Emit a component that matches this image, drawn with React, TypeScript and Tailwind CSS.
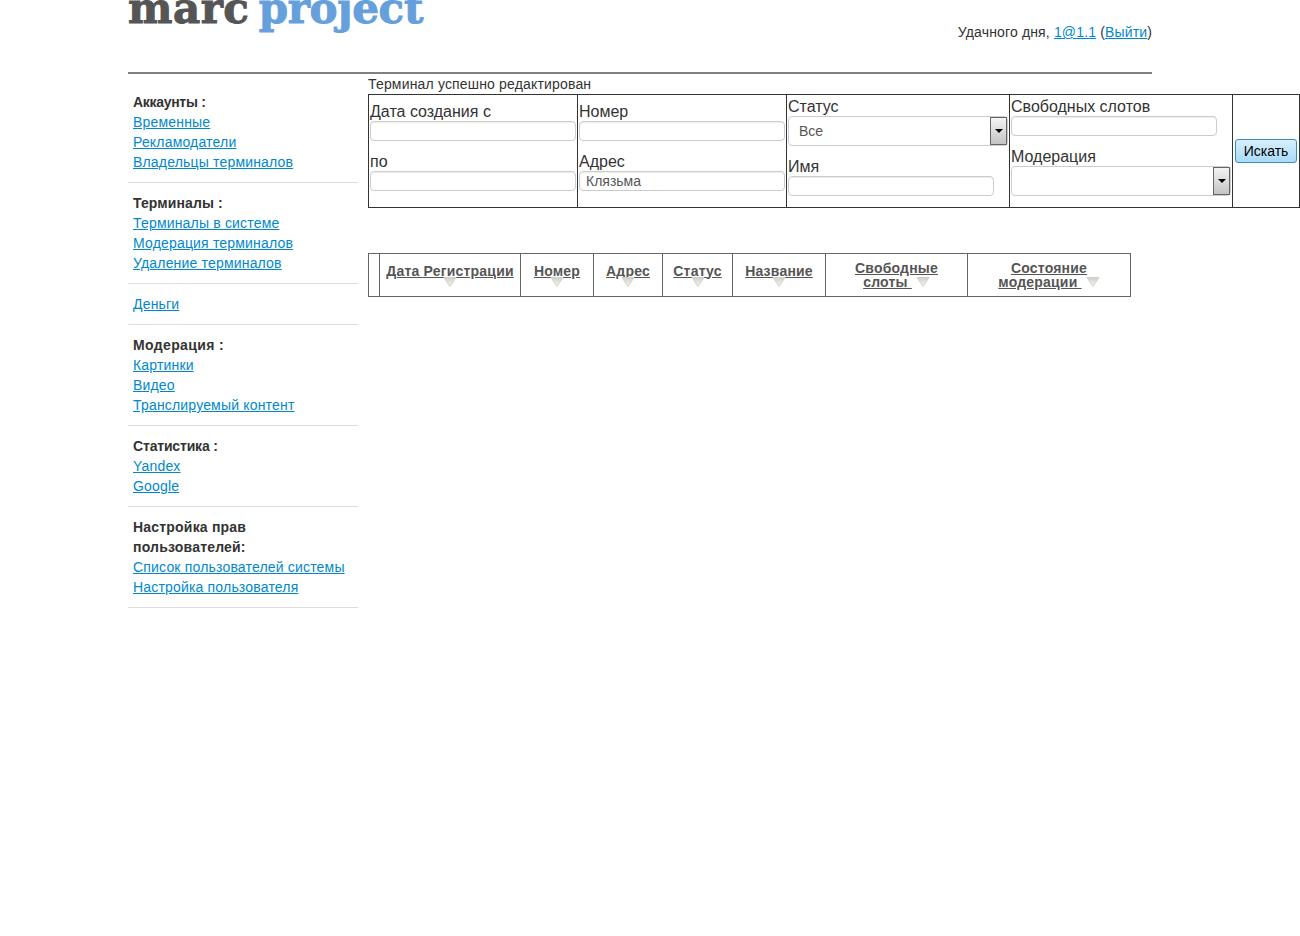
const menu = [
  { title: "Аккаунты :", track: "tracking-[-0.3px]", links: ["Временные", "Рекламодатели", "Владельцы терминалов"] },
  { title: "Терминалы :", track: "tracking-[0.1px]", links: ["Терминалы в системе", "Модерация терминалов", "Удаление терминалов"] },
  { title: "", track: "", links: ["Деньги"] },
  { title: "Модерация :", track: "tracking-[0.36px]", links: ["Картинки", "Видео", "Транслируемый контент"] },
  { title: "Статистика :", track: "tracking-[-0.17px]", links: ["Yandex", "Google"] },
  { title: "Настройка прав пользователей:", track: "tracking-[0.2px]", links: ["Список пользователей системы", "Настройка пользователя"] },
];

function Arrow() {
  return (
    <svg width="14" height="10" viewBox="0 0 14 10" className="inline-block align-top">
      <defs>
        <linearGradient id="tri" x1="0" y1="0" x2="0" y2="1">
          <stop offset="0" stopColor="#d0d0c8" />
          <stop offset="1" stopColor="#f8f8f4" />
        </linearGradient>
      </defs>
      <path d="M1 0.5 H13 L7 9.5 Z" fill="url(#tri)" stroke="#d0d0d0" strokeWidth="1" />
    </svg>
  );
}

function Field({ label, value = "" }: { label: string; value?: string }) {
  return (
    <div className="mb-[10px]">
      <div className="text-[16px] leading-[20px] pt-px -mb-px text-[#333]">{label}</div>
      <input
        readOnly
        value={value}
        className="block w-full h-[20px] px-[6px] border border-[#ccc] rounded-[4px] text-[14px] text-[#555] bg-white shadow-[inset_0_1px_1px_rgba(0,0,0,0.075)] outline-none"
      />
    </div>
  );
}

function SelectBox({ label, value = "" }: { label: string; value?: string }) {
  return (
    <div className="mb-[10px]">
      <div className="text-[16px] leading-[20px] pt-px -mb-px text-[#333]">{label}</div>
      <div className="flex items-center justify-between h-[30px] pl-[10px] border border-[#ccc] rounded-[4px] text-[14px] text-[#555] bg-white">
        <span>{value}</span>
        <span className="flex items-center justify-center w-[17px] h-[28px] border border-[#666] bg-gradient-to-b from-[#f4f4f4] to-[#c4c4c4]">
          <span className="w-0 h-0 border-x-[4px] border-x-transparent border-t-[4px] border-t-black" />
        </span>
      </div>
    </div>
  );
}

function Th({ children, stacked = true }: { children: React.ReactNode; stacked?: boolean }) {
  return (
    <th className={`border border-[#666] p-0 text-center align-middle font-bold text-[14px] leading-[14px] tracking-[0.2px] text-[#555] ${stacked ? "" : "pt-[2px]"}`}>
      {children}
      {stacked && (
        <div className="h-[10px] -mt-px leading-none">
          <Arrow />
        </div>
      )}
    </th>
  );
}

export default function App() {
  return (
    <div className="min-h-[936px] bg-white text-[14px] leading-[20px] text-[#333] font-['Liberation_Sans',Arial,sans-serif] overflow-hidden">
      <div className="ml-[128px] w-[1024px]">
        <header className="flex justify-between h-[72px]">
          <div className="-mt-[21px] h-[60px] text-[42px] leading-[60px] font-bold whitespace-nowrap font-['DejaVu_Serif',serif] text-[#555] tracking-[-0.3px] [word-spacing:-5px] [-webkit-text-stroke:1px]">
            <span className="tracking-[0.5px]">marc</span> <span className="text-[#659fdc]">project</span>
          </div>
          <div className="pt-[22px] tracking-[0.15px]">
            Удачного дня, <a href="#" className="underline text-[#0088cc]">1@1.1</a> (
            <a href="#" className="underline text-[#0088cc]">Выйти</a>)
          </div>
        </header>
        <div className="h-[2px] bg-[#808080]" />

        <div className="flex gap-[10px]">
          <aside className="w-[230px] shrink-0 pt-[18px]">
            {menu.map((section, i) => (
              <div key={i} className={`px-[5px] pb-[10px] border-b border-[#ddd] ${i > 0 ? "pt-[10px]" : ""}`}>
                {section.title && <div className={`font-bold ${section.track}`}>{section.title}</div>}
                {section.links.map((link) => (
                  <a key={link} href="#" className="block underline text-[#0088cc] tracking-[0.18px]">
                    {link}
                  </a>
                ))}
              </div>
            ))}
          </aside>

          <main className="min-w-0 flex-1">
            <div className="h-[20px] leading-[20px] tracking-[0.17px]">Терминал успешно редактирован</div>
            <table className="w-[932px] max-w-none table-fixed border-collapse">
              <colgroup>
                <col className="w-[209px]" />
                <col className="w-[209px]" />
                <col className="w-[223px]" />
                <col className="w-[223px]" />
                <col className="w-[67px]" />
              </colgroup>
              <tbody>
                <tr>
                  <td className="border border-[#333] p-px align-middle">
                    <Field label="Дата создания с" />
                    <Field label="по" />
                  </td>
                  <td className="border border-[#333] p-px align-middle">
                    <Field label="Номер" />
                    <Field label="Адрес" value="Клязьма" />
                  </td>
                  <td className="border border-[#333] p-px align-middle">
                    <SelectBox label="Статус" value="Все" />
                    <div className="w-[206px]">
                      <Field label="Имя" />
                    </div>
                  </td>
                  <td className="border border-[#333] p-px align-middle">
                    <div className="w-[206px]">
                      <Field label="Свободных слотов" />
                    </div>
                    <SelectBox label="Модерация" />
                  </td>
                  <td className="border border-[#333] p-px align-middle text-center">
                    <button className="w-[62px] h-[24px] rounded-[3px] border border-[#3c8dc5] bg-gradient-to-b from-[#d8effc] to-[#a8daf8] text-[14px] leading-none text-black">
                      Искать
                    </button>
                  </td>
                </tr>
              </tbody>
            </table>

            <table className="mt-[45px] w-[763px] max-w-none table-fixed border-collapse">
              <colgroup>
                <col className="w-[11px]" />
                <col className="w-[141px]" />
                <col className="w-[73px]" />
                <col className="w-[69px]" />
                <col className="w-[70px]" />
                <col className="w-[93px]" />
                <col className="w-[142px]" />
                <col className="w-[163px]" />
              </colgroup>
              <thead>
                <tr className="h-[43px]">
                  <th className="border border-[#666] p-0" />
                  <Th><span className="underline">Дата Регистрации</span></Th>
                  <Th><span className="underline">Номер</span></Th>
                  <Th><span className="underline">Адрес</span></Th>
                  <Th><span className="underline">Статус</span></Th>
                  <Th><span className="underline">Название</span></Th>
                  <Th stacked={false}>
                    <span className="underline">Свободные<br />слоты&nbsp;</span> <span className="align-[-2px]"><Arrow /></span>
                  </Th>
                  <Th stacked={false}>
                    <span className="underline">Состояние<br />модерации&nbsp;</span> <span className="align-[-2px]"><Arrow /></span>
                  </Th>
                </tr>
              </thead>
            </table>
          </main>
        </div>
      </div>
    </div>
  );
}
